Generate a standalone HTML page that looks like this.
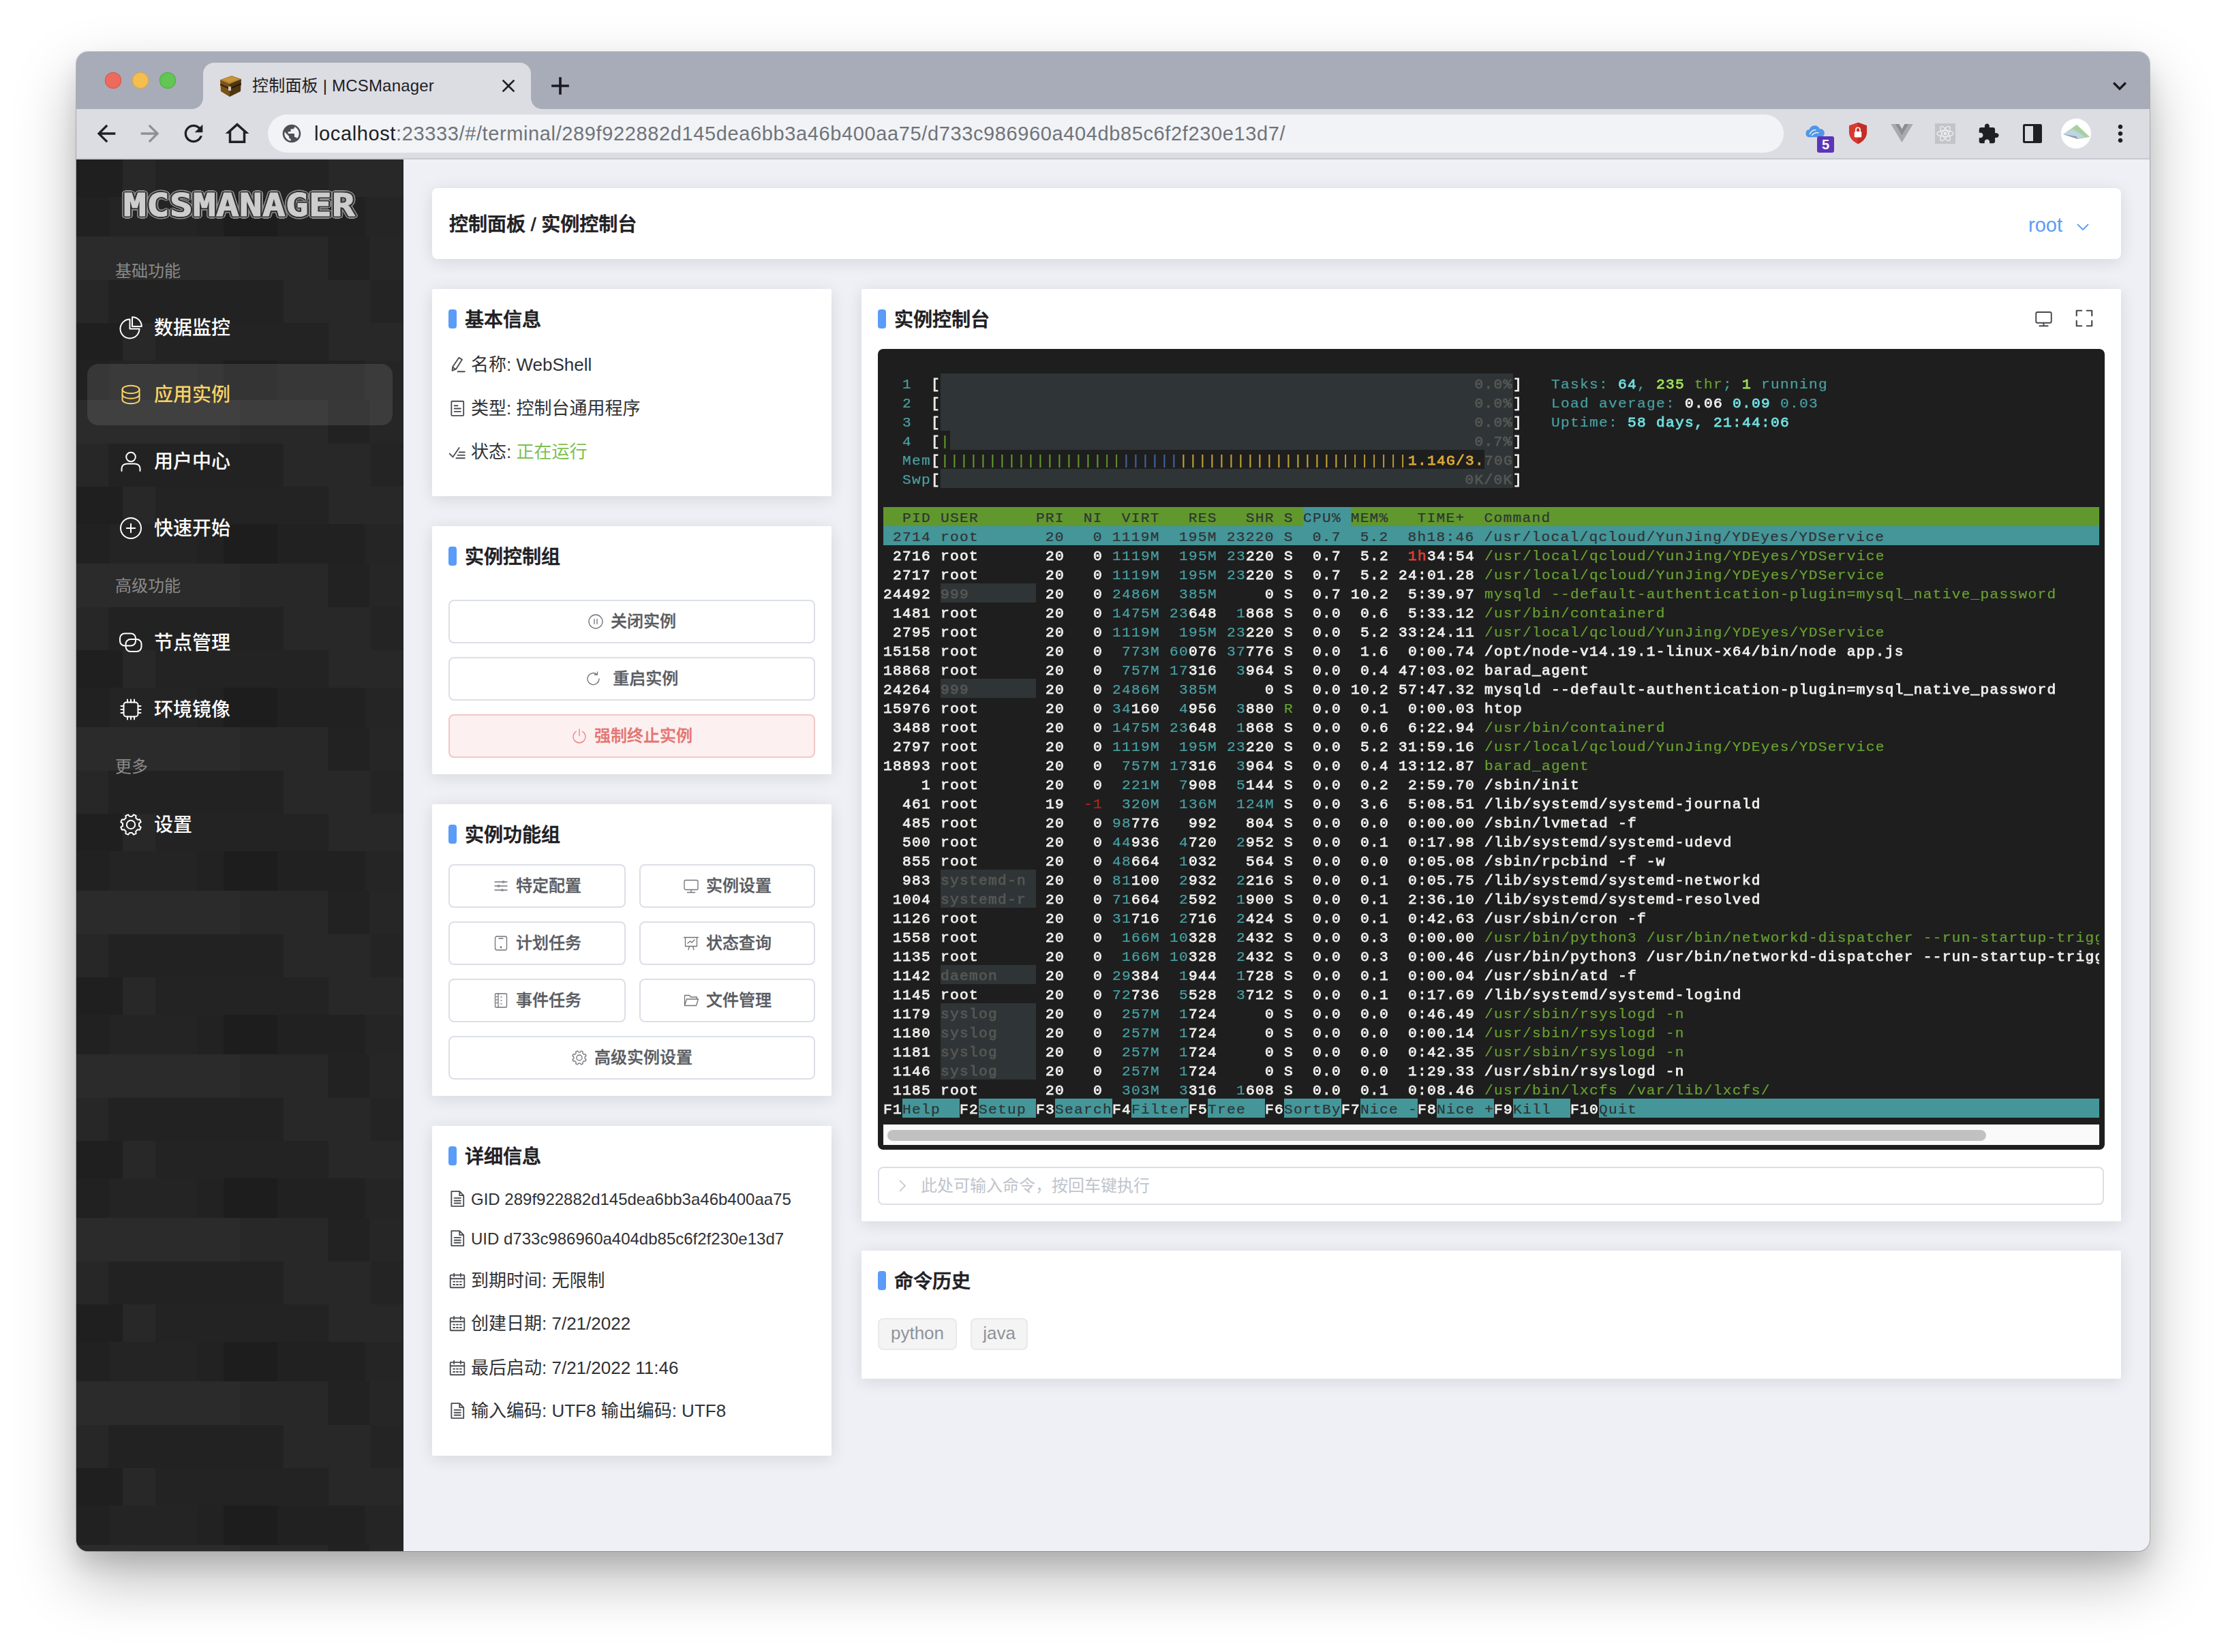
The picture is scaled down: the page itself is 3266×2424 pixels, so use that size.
<!DOCTYPE html>
<html lang="zh-CN"><head><meta charset="utf-8"><title>控制面板 | MCSManager</title>
<style>
*{box-sizing:border-box;margin:0;padding:0}
html,body{width:3266px;height:2424px;overflow:hidden;background:#fff}
body{position:relative;font-family:"Liberation Sans","Noto Sans CJK SC",sans-serif;color:#303133;-webkit-font-smoothing:antialiased}
.abs{position:absolute}
#win{position:absolute;left:112px;top:76px;width:3042px;height:2200px;border-radius:17px;background:#eef0f5;
 box-shadow:0 0 0 1px rgba(0,0,0,.20),0 40px 90px rgba(0,0,0,.28),0 20px 30px rgba(0,0,0,.10);}
#clip{position:absolute;left:0;top:0;width:3042px;height:2200px;border-radius:17px;overflow:hidden}
#tabbar{position:absolute;left:0;top:0;width:3042px;height:84px;background:#a8abb8}
#toolbar{position:absolute;left:0;top:84px;width:3042px;height:74px;background:#dcdde3;border-bottom:2px solid #c9cad1}
.tl{position:absolute;top:30px;width:24px;height:24px;border-radius:50%}
#tab{position:absolute;left:186px;top:16px;width:481px;height:68px;background:#dcdde3;border-radius:16px 16px 0 0}
#tab:before,#tab:after{content:"";position:absolute;bottom:0;width:16px;height:16px;background:radial-gradient(circle at 0 0,rgba(0,0,0,0) 15.5px,#dcdde3 16px)}
#tab:before{left:-16px}
#tab:after{right:-16px;background:radial-gradient(circle at 100% 0,rgba(0,0,0,0) 15.5px,#dcdde3 16px)}
#omni{position:absolute;left:281px;top:8px;width:2224px;height:56px;border-radius:28px;background:#f1f3f6}
#side{position:absolute;left:0;top:158px;width:480px;height:2042px;background:#242424;overflow:hidden}
.grp{position:absolute;left:57px;font-size:24px;line-height:32px;color:#8a8a8a;white-space:nowrap}
.mi{position:absolute;left:16px;width:448px;height:90px;border-radius:16px;color:#fff;font-size:28px;font-weight:500;white-space:nowrap}
.mi svg{position:absolute;left:46px;top:27px;width:36px;height:36px;fill:none;stroke:currentColor;stroke-width:2;stroke-linecap:round;stroke-linejoin:round}
.mi span{position:absolute;left:98px;top:0;line-height:91px}
.mi.act{background:rgba(255,255,255,.1);color:#f8d264}
.card{position:absolute;background:#fff;border-radius:2px;box-shadow:0 4px 24px rgba(10,15,30,.11)}
.ct{position:absolute;left:24px;top:30px;height:28px;padding-left:24px;font-size:28px;line-height:31px;font-weight:500;-webkit-text-stroke:.7px #1f2023;color:#1f2023;white-space:nowrap}
.ct:before{content:"";position:absolute;left:0;top:0;width:12px;height:28px;border-radius:4px;background:#5a9cf8}
.ln{position:absolute;left:24px;font-size:26px;line-height:40px;white-space:nowrap;color:#303133}
.ln svg{position:absolute;left:0;top:7px;width:26px;height:26px;fill:none;stroke:#4a4c50;stroke-width:1.7;stroke-linecap:round;stroke-linejoin:round}
.ln span{position:absolute;left:33px;top:0}
.btn{position:absolute;height:64px;border:2px solid #dcdfe6;border-radius:8px;background:#fff;color:#585b62;-webkit-text-stroke:.35px currentColor;font-size:24px;font-weight:500;line-height:60px;text-align:center;white-space:nowrap}
.btn svg{display:inline-block;vertical-align:middle;width:24px;height:24px;margin-right:10px;margin-top:-4px;fill:none;stroke:currentColor;stroke-width:1.3;opacity:.85;stroke-linecap:round;stroke-linejoin:round}
.btn.dg{background:#fcf0f0;border-color:#f2c6c5;color:#e47470}
#term{position:absolute;left:24px;top:88px;width:1800px;height:1175px;border-radius:8px;background:#1e1e1e;overflow:hidden}
#tv{position:absolute;left:8px;top:8px;width:1784px;height:1200px;transform:scaleY(.933333);transform-origin:0 0;overflow:hidden;font-family:"Liberation Mono",monospace;font-size:21.2px;line-height:30px;letter-spacing:1.278px;color:#eeeeec;white-space:pre}
.r{position:absolute;left:0;height:30px;width:2100px}
.r i{-webkit-text-stroke:.25px currentColor;position:absolute;top:0;height:30px;line-height:36.4px;font-style:normal;display:block;overflow:visible}
.r i.b{font-weight:400;-webkit-text-stroke:.85px currentColor}
.tag{position:absolute;top:99px;height:47px;border:2px solid #e9e9eb;border-radius:8px;background:#f4f4f5;color:#909399;font-size:26px;line-height:41px;text-align:center}
#logo{white-space:nowrap}#logo span{position:absolute;left:1px;top:0px;display:block;transform-origin:0 0;transform:scaleX(1.215);font:bold 46px/44px 'DejaVu Sans Mono','Liberation Mono',monospace;letter-spacing:.3px;color:#cdcdcd;-webkit-text-stroke:1.2px #cdcdcd;text-shadow:1.8px 0.0px 0 #333,1.7px 0.6px 0 #333,1.5px 1.1px 0 #333,1.1px 1.5px 0 #333,0.6px 1.7px 0 #333,0.0px 1.8px 0 #333,-0.6px 1.7px 0 #333,-1.1px 1.5px 0 #333,-1.5px 1.1px 0 #333,-1.7px 0.6px 0 #333,-1.8px 0.0px 0 #333,-1.7px -0.6px 0 #333,-1.5px -1.1px 0 #333,-1.1px -1.5px 0 #333,-0.6px -1.7px 0 #333,-0.0px -1.8px 0 #333,0.6px -1.7px 0 #333,1.1px -1.5px 0 #333,1.5px -1.1px 0 #333,1.7px -0.6px 0 #333,2.2px 0.0px 0 #333,2.1px 0.7px 0 #333,1.8px 1.3px 0 #333,1.3px 1.8px 0 #333,0.7px 2.1px 0 #333,0.0px 2.2px 0 #333,-0.7px 2.1px 0 #333,-1.3px 1.8px 0 #333,-1.8px 1.3px 0 #333,-2.1px 0.7px 0 #333,-2.2px 0.0px 0 #333,-2.1px -0.7px 0 #333,-1.8px -1.3px 0 #333,-1.3px -1.8px 0 #333,-0.7px -2.1px 0 #333,-0.0px -2.2px 0 #333,0.7px -2.1px 0 #333,1.3px -1.8px 0 #333,1.8px -1.3px 0 #333,2.1px -0.7px 0 #333,3.6px 0.0px 0 #8e8e8e,3.4px 1.1px 0 #8e8e8e,2.9px 2.1px 0 #8e8e8e,2.1px 2.9px 0 #8e8e8e,1.1px 3.4px 0 #8e8e8e,0.0px 3.6px 0 #8e8e8e,-1.1px 3.4px 0 #8e8e8e,-2.1px 2.9px 0 #8e8e8e,-2.9px 2.1px 0 #8e8e8e,-3.4px 1.1px 0 #8e8e8e,-3.6px 0.0px 0 #8e8e8e,-3.4px -1.1px 0 #8e8e8e,-2.9px -2.1px 0 #8e8e8e,-2.1px -2.9px 0 #8e8e8e,-1.1px -3.4px 0 #8e8e8e,-0.0px -3.6px 0 #8e8e8e,1.1px -3.4px 0 #8e8e8e,2.1px -2.9px 0 #8e8e8e,2.9px -2.1px 0 #8e8e8e,3.4px -1.1px 0 #8e8e8e}
</style></head>
<body>
<div id="win"><div id="clip">
<div id="tabbar">
<div class="tl" style="left:42px;background:#ed6a5e;box-shadow:inset 0 0 0 1px #d5574a"></div>
<div class="tl" style="left:82px;background:#f5bf4f;box-shadow:inset 0 0 0 1px #dba53a"></div>
<div class="tl" style="left:122px;background:#62c554;box-shadow:inset 0 0 0 1px #4fae42"></div>
<div id="tab">
<svg class="abs" style="left:22px;top:17px;width:36px;height:34px" viewBox="0 0 36 34">
<polygon points="3,8 20,2 34,7 17,14" fill="#b0802f"/><polygon points="3,8 17,14 17,33 4,25" fill="#7a5216"/><polygon points="17,14 34,7 33,25 17,33" fill="#50360f"/>
<polygon points="3,14 17,20 17,22 3,16" fill="#2c1d08"/><polygon points="17,20 34,13 34,15 17,22" fill="#22160a"/>
<rect x="15" y="18" width="4" height="6" fill="#c8c8c8"/><polygon points="6,8 20,3.5 30,7 17,12" fill="#c7953a"/></svg>
<div class="abs" style="left:72px;top:17px;font-size:24px;line-height:34px;color:#202124;white-space:nowrap;letter-spacing:.2px">控制面板 | MCSManager</div>
<svg class="abs" style="left:431.5px;top:18.0px;width:32px;height:32px" viewBox="0 0 24 24" fill="#202124" ><path d="M19 6.41L17.59 5 12 10.59 6.41 5 5 6.41 10.59 12 5 17.59 6.41 19 12 13.41 17.59 19 19 17.59 13.41 12z"/></svg>
</div>
<svg class="abs" style="left:688.0px;top:28.0px;width:44px;height:44px" viewBox="0 0 24 24" fill="#1a1a1e" ><path d="M19 13h-6v6h-2v-6H5v-2h6V5h2v6h6v2z"/></svg>
<svg class="abs" style="left:2978.0px;top:30.0px;width:40px;height:40px" viewBox="0 0 24 24" fill="#1a1a1e" ><path d="M16.59 8.59L12 13.17 7.41 8.59 6 10l6 6 6-6z"/></svg>
</div>
<div id="toolbar">
<svg class="abs" style="left:24.0px;top:16.0px;width:40px;height:40px" viewBox="0 0 24 24" fill="#1f2023" ><path d="M20 11H7.83l5.59-5.59L12 4l-8 8 8 8 1.41-1.41L7.83 13H20v-2z"/></svg>
<svg class="abs" style="left:88.0px;top:16.0px;width:40px;height:40px" viewBox="0 0 24 24" fill="#8f9096" ><path d="M12 4l-1.41 1.41L16.17 11H4v2h12.17l-5.58 5.59L12 20l8-8z"/></svg>
<svg class="abs" style="left:152.0px;top:16.0px;width:40px;height:40px" viewBox="0 0 24 24" fill="#1f2023" ><path d="M17.65 6.35C16.2 4.9 14.21 4 12 4c-4.42 0-7.99 3.58-7.99 8s3.57 8 7.99 8c3.73 0 6.84-2.55 7.73-6h-2.08c-.82 2.33-3.04 4-5.65 4-3.31 0-6-2.69-6-6s2.69-6 6-6c1.66 0 3.14.69 4.22 1.78L13 11h7V4l-2.35 2.35z"/></svg>
<svg class="abs" style="left:215.0px;top:15.0px;width:42px;height:42px" viewBox="0 0 24 24" fill="#1f2023" ><path d="M12 5.69l5 4.5V18H7v-7.81l5-4.5M12 3L2 12h3v8h14v-8h3L12 3z"/></svg>
<div id="omni">
<svg class="abs" style="left:19.0px;top:12.0px;width:32px;height:32px" viewBox="0 0 24 24" fill="#4d5056" ><path d="M12 2C6.48 2 2 6.48 2 12s4.48 10 10 10 10-4.48 10-10S17.52 2 12 2zm-1 17.93c-3.95-.49-7-3.85-7-7.93 0-.62.08-1.21.21-1.79L9 15v1c0 1.1.9 2 2 2v1.93zm6.9-2.54c-.26-.81-1-1.39-1.9-1.39h-1v-3c0-.55-.45-1-1-1H8v-2h2c.55 0 1-.45 1-1V7h2c1.1 0 2-.9 2-2v-.41c2.93 1.19 5 4.06 5 7.41 0 2.08-.8 3.97-2.1 5.39z"/></svg>
<div class="abs" style="left:68px;top:8px;font-size:29px;line-height:40px;color:#70737a;white-space:nowrap;letter-spacing:.62px"><span style="color:#202124">localhost</span>:23333/#/terminal/289f922882d145dea6bb3a46b400aa75/d733c986960a404db85c6f2f230e13d7/</div>
</div>
<svg class="abs" style="left:2535px;top:22px;width:32px;height:24px" viewBox="0 0 40 30"><path d="M9 24a7 7 0 0 1 .6-13.9A10 10 0 0 1 28.500 9 7.500 7.500 0 0 1 31 24z" fill="#4f97e8"/><path d="M10 19c3-6 7-9 12-8M14 21c4-5 8-6 13-5" stroke="#fff" stroke-width="1.6" fill="none"/></svg>
<div class="abs" style="left:2554px;top:40px;width:25px;height:24px;background:#5b34b8;border-radius:3px;color:#fff;font-size:20px;font-weight:700;line-height:24px;text-align:center">5</div>
<svg class="abs" style="left:2599px;top:19px;width:30px;height:33px" viewBox="0 0 34 38"><path d="M17 1L2 6v11c0 9 6 16 15 20 9-4 15-11 15-20V6z" fill="#d8392f"/><path d="M17 1v36c9-4 15-11 15-20V6z" fill="#c42d25"/><rect x="11" y="16" width="12" height="10" rx="1.500" fill="#fff"/><path d="M13.500 16v-3a3.500 3.500 0 0 1 7 0v3" stroke="#fff" stroke-width="2" fill="none"/></svg>
<svg class="abs" style="left:2662px;top:22px;width:33px;height:27px" viewBox="0 0 36 30"><polygon points="0,0 7,0 18,19 29,0 36,0 18,30" fill="#a8a9ad"/><polygon points="7,0 13.500,0 18,8 22.500,0 29,0 18,19" fill="#8c8d92"/></svg>
<svg class="abs" style="left:2727px;top:21px;width:30px;height:30px" viewBox="0 0 30 30"><rect width="30" height="30" fill="#c3c4c8"/><g fill="none" stroke="#eeeff2" stroke-width="1.300"><ellipse cx="15" cy="15" rx="12" ry="4.500"/><ellipse cx="15" cy="15" rx="12" ry="4.500" transform="rotate(60 15 15)"/><ellipse cx="15" cy="15" rx="12" ry="4.500" transform="rotate(120 15 15)"/></g><circle cx="15" cy="15" r="2.200" fill="#eeeff2"/></svg>
<svg class="abs" style="left:2788.5px;top:19.5px;width:33px;height:33px" viewBox="0 0 24 24" fill="#1f2023" ><path d="M20.5 11H19V7c0-1.1-.9-2-2-2h-4V3.5C13 2.12 11.88 1 10.5 1S8 2.12 8 3.5V5H4c-1.1 0-1.99.9-1.99 2v3.8H3.5c1.49 0 2.7 1.21 2.7 2.7s-1.21 2.7-2.7 2.7H2V20c0 1.1.9 2 2 2h3.8v-1.5c0-1.49 1.21-2.7 2.7-2.7 1.49 0 2.7 1.21 2.7 2.7V22H17c1.1 0 2-.9 2-2v-4h1.5c1.38 0 2.5-1.12 2.5-2.5S21.88 11 20.5 11z"/></svg>
<svg class="abs" style="left:2856px;top:22px;width:28px;height:28px" viewBox="0 0 28 28"><rect x="1.500" y="1.500" width="25" height="25" rx="1" fill="none" stroke="#1f2023" stroke-width="3"/><rect x="15" y="2" width="11" height="24" fill="#1f2023"/></svg>
<svg class="abs" style="left:2912px;top:14px;width:44px;height:44px" viewBox="0 0 44 44"><circle cx="22" cy="22" r="22" fill="#fff"/><polygon points="3,23 23,9 42,27 25,30" fill="#b5d3ac"/><polygon points="3,23 16,16 34,26 25,30" fill="#bcd4e6"/><polygon points="3,23 25,30 22,26" fill="#8c9aa6"/><polygon points="23,9 42,27 36,27 17,14" fill="#a8cfa2"/></svg>
<svg class="abs" style="left:2979.0px;top:16.0px;width:40px;height:40px" viewBox="0 0 24 24" fill="#1f2023" ><path d="M12 8c1.1 0 2-.9 2-2s-.9-2-2-2-2 .9-2 2 .9 2 2 2zm0 2c-1.1 0-2 .9-2 2s.9 2 2 2 2-.9 2-2-.9-2-2-2zm0 6c-1.1 0-2 .9-2 2s.9 2 2 2 2-.9 2-2-.9-2-2-2z"/></svg>
</div>
<div id="side">
<svg class="abs" style="left:0;top:0;width:480px;height:2043px"><defs><pattern id="tx" width="480" height="240" y="55" patternUnits="userSpaceOnUse">
<rect width="480" height="240" fill="#242424"/>
<rect x="0" y="0" width="49" height="58" fill="#212121"/><rect x="177" y="0" width="39" height="58" fill="#222"/><rect x="216" y="0" width="79" height="58" fill="#1d1d1d"/><rect x="295" y="0" width="128" height="58" fill="#212121"/><rect x="423" y="0" width="57" height="58" fill="#252525"/>
<rect x="0" y="58" width="240" height="64" fill="#2b2b2b"/><rect x="240" y="58" width="129" height="64" fill="#282828"/><rect x="369" y="58" width="61" height="64" fill="#222"/><rect x="430" y="58" width="50" height="64" fill="#262626"/>
<rect x="0" y="122" width="47" height="63" fill="#272727"/><rect x="47" y="122" width="257" height="63" fill="#222"/><rect x="304" y="122" width="128" height="63" fill="#282828"/><rect x="432" y="122" width="48" height="63" fill="#242424"/>
<rect x="0" y="185" width="68" height="55" fill="#1f1f1f"/><rect x="68" y="185" width="48" height="55" fill="#282828"/><rect x="116" y="185" width="254" height="55" fill="#232323"/><rect x="370" y="185" width="110" height="55" fill="#282828"/>
</pattern></defs><rect width="480" height="2043" fill="url(#tx)"/></svg>
<div class="abs" id="logo" style="left:68px;top:45px;width:343px;height:44px;"><span>MCSMANAGER</span></div>
<div class="grp" style="top:148px">基础功能</div>
<div class="mi" style="top:202px"><svg viewBox="0 0 36 36"><path d="M16.500 5.500A14 14 0 1 0 30.500 19.500H16.500z"/><path d="M20 2.200a13.800 13.800 0 0 1 13.800 13.800H20z"/></svg><span>数据监控</span></div>
<div class="mi act" style="top:300px"><svg viewBox="0 0 36 36"><ellipse cx="18" cy="10.500" rx="12.500" ry="5.800"/><path d="M5.500 10.500v7.500c0 3.200 5.600 5.800 12.500 5.800s12.500-2.600 12.500-5.800v-7.500"/><path d="M5.500 18v7.500c0 3.200 5.600 5.800 12.500 5.800s12.500-2.600 12.500-5.800V18"/></svg><span>应用实例</span></div>
<div class="mi" style="top:398px"><svg viewBox="0 0 36 36"><circle cx="18" cy="11.500" r="6.800"/><path d="M4.500 32v-3.500c0-4.400 3.600-7 8-7h11c4.400 0 8 2.600 8 7V32"/></svg><span>用户中心</span></div>
<div class="mi" style="top:496px"><svg viewBox="0 0 36 36"><circle cx="18" cy="18" r="15"/><path d="M18 11.800v12.400M11.800 18h12.400"/></svg><span>快速开始</span></div>
<div class="grp" style="top:610px">高级功能</div>
<div class="mi" style="top:664px"><svg viewBox="0 0 36 36"><rect x="2" y="4.500" width="23" height="18" rx="7"/><rect x="10.500" y="13" width="23" height="18" rx="7"/></svg><span>节点管理</span></div>
<div class="mi" style="top:762px"><svg viewBox="0 0 36 36"><rect x="7.500" y="7.500" width="21" height="21" rx="4"/><path d="M13 3.500v4M18 3.500v4M23 3.500v4M13 28.500v4M18 28.500v4M23 28.500v4M3.500 13h4M3.500 18h4M3.500 23h4M28.500 13h4M28.500 18h4M28.500 23h4"/></svg><span>环境镜像</span></div>
<div class="grp" style="top:875px">更多</div>
<div class="mi" style="top:931px"><svg viewBox="0 0 36 36"><circle cx="18" cy="18" r="6.200"/><path d="M30.0 19.9L32.7 21.9L31.1 25.6L27.9 25.2L25.2 27.9L25.6 31.1L21.9 32.7L19.9 30.0L16.1 30.0L14.1 32.7L10.4 31.1L10.8 27.9L8.1 25.2L4.9 25.6L3.3 21.9L6.0 19.9L6.0 16.1L3.3 14.1L4.9 10.4L8.1 10.8L10.8 8.1L10.4 4.9L14.1 3.3L16.1 6.0L19.9 6.0L21.9 3.3L25.6 4.9L25.2 8.1L27.9 10.8L31.1 10.4L32.7 14.1L30.0 16.1z"/></svg><span>设置</span></div>
</div>
<div class="card" style="left:522px;top:200px;width:2478px;height:104px;border-radius:8px"><div class="abs" style="left:25px;top:34px;font-size:28px;line-height:40px;font-weight:500;-webkit-text-stroke:.7px #1f2023;color:#1f2023;white-space:nowrap">控制面板 / 实例控制台</div><div class="abs" style="left:2342px;top:36px;font-size:29px;line-height:36px;color:#5a9cf8">root</div><svg class="abs" style="left:2410px;top:45px;width:24px;height:24px;fill:none;stroke:#5a9cf8;stroke-width:1.800;stroke-linecap:round;stroke-linejoin:round" viewBox="0 0 24 24"><path d="M4.500 8.500l7.500 7.500 7.500-7.500"/></svg></div>
<div class="card" style="left:522px;top:348px;width:586px;height:304px"><div class="ct">基本信息</div><div class="ln" style="top:91px"><svg viewBox="0 0 24 24"><path d="M14.200 2.500l4.200 2.700-8.300 13-5 2 .6-5.200zM5.500 15.500l4.300 2.800M12.500 21.500h9.500"/></svg><span>名称: WebShell</span></div><div class="ln" style="top:155px"><svg viewBox="0 0 24 24"><rect x="4" y="2.500" width="16.500" height="19.500" rx="1"/><path d="M8 8.500h4.500M8 12.500h8.500M8 16.500h8.500"/></svg><span>类型: 控制台通用程序</span></div><div class="ln" style="top:219px"><svg viewBox="0 0 24 24"><path d="M1.500 14.500l4.500 4.500L14.500 6.500M14.500 12.500h7.500M12.500 16.500h9.500M10.500 20.500h11.500"/></svg><span>状态: <b style="font-weight:400;color:#7ec050">正在运行</b></span></div></div>
<div class="card" style="left:522px;top:696px;width:586px;height:364px"><div class="ct">实例控制组</div><div class="btn" style="left:24px;top:108px;width:538px"><svg viewBox="0 0 24 24"><circle cx="12" cy="12" r="10"/><path d="M10 8.500v7M14 8.500v7"/></svg>关闭实例</div><div class="btn" style="left:24px;top:192px;width:538px"><svg viewBox="0 0 24 24"><path d="M20 12a8.500 8.500 0 1 1-3.200-6.600M17.500 1.800v4.200h-4.200"/></svg>&nbsp;重启实例</div><div class="btn dg" style="left:24px;top:276px;width:538px"><svg viewBox="0 0 24 24"><path d="M7.500 5.200a9 9 0 1 0 9 0M12 2v9.500"/></svg>强制终止实例</div></div>
<div class="card" style="left:522px;top:1104px;width:586px;height:428px"><div class="ct">实例功能组</div><div class="btn" style="left:24px;top:88px;width:260px"><svg viewBox="0 0 24 24"><path d="M3 6h18M3 12h18M3 18h18"/><circle cx="15.500" cy="6" r="1.200" fill="#fff"/><circle cx="8.500" cy="12" r="1.200" fill="#fff"/><circle cx="14" cy="18" r="1.200" fill="#fff"/></svg>特定配置</div><div class="btn" style="left:304px;top:88px;width:258px"><svg viewBox="0 0 24 24"><rect x="2" y="3.500" width="20" height="14" rx="2"/><path d="M12 17.500v4M6.500 21.500h11"/></svg>实例设置</div><div class="btn" style="left:24px;top:172px;width:260px"><svg viewBox="0 0 24 24"><rect x="3.500" y="2" width="17" height="20" rx="2.500"/><path d="M9 5h6"/><circle cx="12" cy="18" r=".8" fill="currentColor"/></svg>计划任务</div><div class="btn" style="left:304px;top:172px;width:258px"><svg viewBox="0 0 24 24"><path d="M1.500 3.500h21M3.500 3.500v13h17v-13M8 21.500l1.500-5M16 21.500l-1.500-5M7 12l3.500-3 2.500 2 4-4"/></svg>状态查询</div><div class="btn" style="left:24px;top:256px;width:260px"><svg viewBox="0 0 24 24"><rect x="3.500" y="2" width="17" height="20" rx="1"/><path d="M8 2v20M5 6.500h1.500M5 11h1.500M5 15.500h1.500M12 7h1M12 12h1M12 17h1"/></svg>事件任务</div><div class="btn" style="left:304px;top:256px;width:258px"><svg viewBox="0 0 24 24"><path d="M2.500 19.500v-15h7l2 2.500h9v3M2.500 19.500l3-9.500h17l-3 9.500z"/></svg>文件管理</div><div class="btn" style="left:24px;top:340px;width:538px"><svg viewBox="0 0 24 24"><circle cx="12" cy="12" r="4"/><path d="M20.1 13.3L22.0 14.6L20.9 17.2L18.6 16.8L16.8 18.6L17.2 20.9L14.6 22.0L13.3 20.1L10.7 20.1L9.4 22.0L6.8 20.9L7.2 18.6L5.4 16.8L3.1 17.2L2.0 14.6L3.9 13.3L3.9 10.7L2.0 9.4L3.1 6.8L5.4 7.2L7.2 5.4L6.8 3.1L9.4 2.0L10.7 3.9L13.3 3.9L14.6 2.0L17.2 3.1L16.8 5.4L18.6 7.2L20.9 6.8L22.0 9.4L20.1 10.7z"/></svg>高级实例设置</div></div>
<div class="card" style="left:522px;top:1576px;width:586px;height:484px"><div class="ct">详细信息</div><div class="ln" style="top:87px"><svg viewBox="0 0 24 24"><path d="M4 2h11l5.500 5.500V22H4zM15 2v5.500h5.500M8 11h8.500M8 14.500h8.500M8 18h8.500"/></svg><span><b style="font-weight:400;font-size:24px">GID 289f922882d145dea6bb3a46b400aa75</b></span></div><div class="ln" style="top:145px"><svg viewBox="0 0 24 24"><path d="M4 2h11l5.500 5.500V22H4zM15 2v5.500h5.500M8 11h8.500M8 14.500h8.500M8 18h8.500"/></svg><span><b style="font-weight:400;font-size:24px">UID d733c986960a404db85c6f2f230e13d7</b></span></div><div class="ln" style="top:207px"><svg viewBox="0 0 24 24"><rect x="2.500" y="4.500" width="19" height="17" rx="1"/><path d="M2.500 9.500h19M7.500 2.500v4M16.500 2.500v4M6.500 13.500h2M11 13.500h2M15.500 13.500h2M6.500 17.500h2M11 17.500h2M15.500 17.500h2"/></svg><span>到期时间: 无限制</span></div><div class="ln" style="top:270px"><svg viewBox="0 0 24 24"><rect x="2.500" y="4.500" width="19" height="17" rx="1"/><path d="M2.500 9.500h19M7.500 2.500v4M16.500 2.500v4M6.500 13.500h2M11 13.500h2M15.500 13.500h2M6.500 17.500h2M11 17.500h2M15.500 17.500h2"/></svg><span>创建日期: 7/21/2022</span></div><div class="ln" style="top:335px"><svg viewBox="0 0 24 24"><rect x="2.500" y="4.500" width="19" height="17" rx="1"/><path d="M2.500 9.500h19M7.500 2.500v4M16.500 2.500v4M6.500 13.500h2M11 13.500h2M15.500 13.500h2M6.500 17.500h2M11 17.500h2M15.500 17.500h2"/></svg><span>最后启动: 7/21/2022 11:46</span></div><div class="ln" style="top:398px"><svg viewBox="0 0 24 24"><path d="M4 2h11l5.500 5.500V22H4zM15 2v5.500h5.500M8 11h8.500M8 14.500h8.500M8 18h8.500"/></svg><span>输入编码: UTF8 输出编码: UTF8</span></div></div>
<div class="card" style="left:1152px;top:348px;width:1848px;height:1368px"><div class="ct">实例控制台</div>
<svg class="abs" style="left:1721px;top:30px;width:27px;height:27px;fill:none;stroke:#46484d;stroke-width:1.700;stroke-linecap:round;stroke-linejoin:round" viewBox="0 0 24 24"><rect x="2" y="3.500" width="20" height="14" rx="2"/><path d="M12 17.500v4M6.500 21.500h11"/></svg>
<svg class="abs" style="left:1779px;top:28px;width:30px;height:30px;fill:none;stroke:#46484d;stroke-width:1.700;stroke-linecap:round;stroke-linejoin:round" viewBox="0 0 24 24"><path d="M3 9V3h6M15 3h6v6M21 15v6h-6M9 21H3v-6"/></svg>
<div id="term"><div id="tv"><div class="r" style="top:30px"><i style="left:28px;width:14px;color:#48a0a3;">1</i><i class="b" style="left:70px;width:14px;color:#eeeeec;">[</i><i class="b" style="left:84px;width:840px;color:#555753;background:#2f3436;">                                                        0.0%</i><i class="b" style="left:924px;width:14px;color:#eeeeec;">]</i><i style="left:980px;width:98px;color:#48a0a3;">Tasks: </i><i class="b" style="left:1078px;width:28px;color:#70dfe0;">64</i><i style="left:1106px;width:28px;color:#48a0a3;">, </i><i class="b" style="left:1134px;width:42px;color:#9ee055;">235</i><i style="left:1176px;width:56px;color:#66a030;"> thr</i><i style="left:1232px;width:28px;color:#48a0a3;">; </i><i class="b" style="left:1260px;width:14px;color:#9ee055;">1</i><i style="left:1274px;width:112px;color:#48a0a3;"> running</i></div><div class="r" style="top:60px"><i style="left:28px;width:14px;color:#48a0a3;">2</i><i class="b" style="left:70px;width:14px;color:#eeeeec;">[</i><i class="b" style="left:84px;width:840px;color:#555753;background:#2f3436;">                                                        0.0%</i><i class="b" style="left:924px;width:14px;color:#eeeeec;">]</i><i style="left:980px;width:196px;color:#48a0a3;">Load average: </i><i class="b" style="left:1176px;width:56px;color:#eeeeec;">0.06</i><i class="b" style="left:1246px;width:56px;color:#70dfe0;">0.09</i><i style="left:1316px;width:56px;color:#48a0a3;">0.03</i></div><div class="r" style="top:90px"><i style="left:28px;width:14px;color:#48a0a3;">3</i><i class="b" style="left:70px;width:14px;color:#eeeeec;">[</i><i class="b" style="left:84px;width:840px;color:#555753;background:#2f3436;">                                                        0.0%</i><i class="b" style="left:924px;width:14px;color:#eeeeec;">]</i><i style="left:980px;width:112px;color:#48a0a3;">Uptime: </i><i class="b" style="left:1092px;width:238px;color:#70dfe0;">58 days, 21:44:06</i></div><div class="r" style="top:120px"><i style="left:28px;width:14px;color:#48a0a3;">4</i><i class="b" style="left:70px;width:14px;color:#eeeeec;">[</i><i style="left:84px;width:14px;color:#61982d;">|</i><i class="b" style="left:98px;width:826px;color:#555753;background:#2f3436;">                                                       0.7%</i><i class="b" style="left:924px;width:14px;color:#eeeeec;">]</i></div><div class="r" style="top:150px"><i style="left:28px;width:42px;color:#48a0a3;">Mem</i><i class="b" style="left:70px;width:14px;color:#eeeeec;">[</i><i style="left:84px;width:266px;color:#61982d;">|||||||||||||||||||</i><i style="left:350px;width:84px;color:#40649f;">||||||</i><i style="left:434px;width:336px;color:#bea134;">||||||||||||||||||||||||</i><i class="b" style="left:770px;width:112px;color:#dcaa38;">1.14G/3.</i><i class="b" style="left:882px;width:42px;color:#555753;background:#2f3436;">70G</i><i class="b" style="left:924px;width:14px;color:#eeeeec;">]</i></div><div class="r" style="top:180px"><i style="left:28px;width:42px;color:#48a0a3;">Swp</i><i class="b" style="left:70px;width:14px;color:#eeeeec;">[</i><i class="b" style="left:84px;width:840px;color:#555753;background:#2f3436;">                                                       0K/0K</i><i class="b" style="left:924px;width:14px;color:#eeeeec;">]</i></div><div class="r" style="top:240px"><i style="left:0px;width:2100px;color:#2f3436;background:#61982d;">  PID USER      PRI  NI  VIRT   RES   SHR S CPU% MEM%   TIME+  Command</i><i style="left:616px;width:70px;color:#2f3436;background:#449699;">CPU% </i></div><div class="r" style="top:270px"><i style="left:0px;width:2100px;color:#2f3436;background:#449699;"> 2714 root       20   0 1119M  195M 23220 S  0.7  5.2  8h18:46 /usr/local/qcloud/YunJing/YDEyes/YDService</i></div><div class="r" style="top:300px"><i class="b" style="left:0px;width:70px;color:#eeeeec;"> 2716</i><i class="b" style="left:84px;width:56px;color:#eeeeec;">root</i><i class="b" style="left:224px;width:42px;color:#eeeeec;"> 20</i><i class="b" style="left:280px;width:42px;color:#eeeeec;">  0</i><i style="left:336px;width:70px;color:#48a0a3;">1119M</i><i style="left:434px;width:56px;color:#48a0a3;">195M</i><i style="left:504px;width:28px;color:#48a0a3;">23</i><i class="b" style="left:532px;width:42px;color:#eeeeec;">220</i><i class="b" style="left:588px;width:14px;color:#eeeeec;">S</i><i class="b" style="left:616px;width:56px;color:#eeeeec;"> 0.7</i><i class="b" style="left:686px;width:56px;color:#eeeeec;"> 5.2</i><i class="b" style="left:770px;width:28px;color:#dc3f36;">1h</i><i class="b" style="left:798px;width:70px;color:#eeeeec;">34:54</i><i style="left:882px;width:588px;color:#66a030;">/usr/local/qcloud/YunJing/YDEyes/YDService</i></div><div class="r" style="top:330px"><i class="b" style="left:0px;width:70px;color:#eeeeec;"> 2717</i><i class="b" style="left:84px;width:56px;color:#eeeeec;">root</i><i class="b" style="left:224px;width:42px;color:#eeeeec;"> 20</i><i class="b" style="left:280px;width:42px;color:#eeeeec;">  0</i><i style="left:336px;width:70px;color:#48a0a3;">1119M</i><i style="left:434px;width:56px;color:#48a0a3;">195M</i><i style="left:504px;width:28px;color:#48a0a3;">23</i><i class="b" style="left:532px;width:42px;color:#eeeeec;">220</i><i class="b" style="left:588px;width:14px;color:#eeeeec;">S</i><i class="b" style="left:616px;width:56px;color:#eeeeec;"> 0.7</i><i class="b" style="left:686px;width:56px;color:#eeeeec;"> 5.2</i><i class="b" style="left:756px;width:112px;color:#eeeeec;">24:01.28</i><i style="left:882px;width:588px;color:#66a030;">/usr/local/qcloud/YunJing/YDEyes/YDService</i></div><div class="r" style="top:360px"><i class="b" style="left:0px;width:70px;color:#eeeeec;">24492</i><i class="b" style="left:84px;width:140px;color:#555753;background:#2f3436;">999</i><i class="b" style="left:224px;width:42px;color:#eeeeec;"> 20</i><i class="b" style="left:280px;width:42px;color:#eeeeec;">  0</i><i style="left:336px;width:70px;color:#48a0a3;">2486M</i><i style="left:434px;width:56px;color:#48a0a3;">385M</i><i class="b" style="left:560px;width:14px;color:#eeeeec;">0</i><i class="b" style="left:588px;width:14px;color:#eeeeec;">S</i><i class="b" style="left:616px;width:56px;color:#eeeeec;"> 0.7</i><i class="b" style="left:686px;width:56px;color:#eeeeec;">10.2</i><i class="b" style="left:756px;width:112px;color:#eeeeec;"> 5:39.97</i><i style="left:882px;width:840px;color:#66a030;">mysqld --default-authentication-plugin=mysql_native_password</i></div><div class="r" style="top:390px"><i class="b" style="left:0px;width:70px;color:#eeeeec;"> 1481</i><i class="b" style="left:84px;width:56px;color:#eeeeec;">root</i><i class="b" style="left:224px;width:42px;color:#eeeeec;"> 20</i><i class="b" style="left:280px;width:42px;color:#eeeeec;">  0</i><i style="left:336px;width:70px;color:#48a0a3;">1475M</i><i style="left:420px;width:28px;color:#48a0a3;">23</i><i class="b" style="left:448px;width:42px;color:#eeeeec;">648</i><i style="left:518px;width:14px;color:#48a0a3;">1</i><i class="b" style="left:532px;width:42px;color:#eeeeec;">868</i><i class="b" style="left:588px;width:14px;color:#eeeeec;">S</i><i class="b" style="left:616px;width:56px;color:#eeeeec;"> 0.0</i><i class="b" style="left:686px;width:56px;color:#eeeeec;"> 0.6</i><i class="b" style="left:756px;width:112px;color:#eeeeec;"> 5:33.12</i><i style="left:882px;width:266px;color:#66a030;">/usr/bin/containerd</i></div><div class="r" style="top:420px"><i class="b" style="left:0px;width:70px;color:#eeeeec;"> 2795</i><i class="b" style="left:84px;width:56px;color:#eeeeec;">root</i><i class="b" style="left:224px;width:42px;color:#eeeeec;"> 20</i><i class="b" style="left:280px;width:42px;color:#eeeeec;">  0</i><i style="left:336px;width:70px;color:#48a0a3;">1119M</i><i style="left:434px;width:56px;color:#48a0a3;">195M</i><i style="left:504px;width:28px;color:#48a0a3;">23</i><i class="b" style="left:532px;width:42px;color:#eeeeec;">220</i><i class="b" style="left:588px;width:14px;color:#eeeeec;">S</i><i class="b" style="left:616px;width:56px;color:#eeeeec;"> 0.0</i><i class="b" style="left:686px;width:56px;color:#eeeeec;"> 5.2</i><i class="b" style="left:756px;width:112px;color:#eeeeec;">33:24.11</i><i style="left:882px;width:588px;color:#66a030;">/usr/local/qcloud/YunJing/YDEyes/YDService</i></div><div class="r" style="top:450px"><i class="b" style="left:0px;width:70px;color:#eeeeec;">15158</i><i class="b" style="left:84px;width:56px;color:#eeeeec;">root</i><i class="b" style="left:224px;width:42px;color:#eeeeec;"> 20</i><i class="b" style="left:280px;width:42px;color:#eeeeec;">  0</i><i style="left:350px;width:56px;color:#48a0a3;">773M</i><i style="left:420px;width:28px;color:#48a0a3;">60</i><i class="b" style="left:448px;width:42px;color:#eeeeec;">076</i><i style="left:504px;width:28px;color:#48a0a3;">37</i><i class="b" style="left:532px;width:42px;color:#eeeeec;">776</i><i class="b" style="left:588px;width:14px;color:#eeeeec;">S</i><i class="b" style="left:616px;width:56px;color:#eeeeec;"> 0.0</i><i class="b" style="left:686px;width:56px;color:#eeeeec;"> 1.6</i><i class="b" style="left:756px;width:112px;color:#eeeeec;"> 0:00.74</i><i class="b" style="left:882px;width:616px;color:#eeeeec;">/opt/node-v14.19.1-linux-x64/bin/node app.js</i></div><div class="r" style="top:480px"><i class="b" style="left:0px;width:70px;color:#eeeeec;">18868</i><i class="b" style="left:84px;width:56px;color:#eeeeec;">root</i><i class="b" style="left:224px;width:42px;color:#eeeeec;"> 20</i><i class="b" style="left:280px;width:42px;color:#eeeeec;">  0</i><i style="left:350px;width:56px;color:#48a0a3;">757M</i><i style="left:420px;width:28px;color:#48a0a3;">17</i><i class="b" style="left:448px;width:42px;color:#eeeeec;">316</i><i style="left:518px;width:14px;color:#48a0a3;">3</i><i class="b" style="left:532px;width:42px;color:#eeeeec;">964</i><i class="b" style="left:588px;width:14px;color:#eeeeec;">S</i><i class="b" style="left:616px;width:56px;color:#eeeeec;"> 0.0</i><i class="b" style="left:686px;width:56px;color:#eeeeec;"> 0.4</i><i class="b" style="left:756px;width:112px;color:#eeeeec;">47:03.02</i><i class="b" style="left:882px;width:154px;color:#eeeeec;">barad_agent</i></div><div class="r" style="top:510px"><i class="b" style="left:0px;width:70px;color:#eeeeec;">24264</i><i class="b" style="left:84px;width:140px;color:#555753;background:#2f3436;">999</i><i class="b" style="left:224px;width:42px;color:#eeeeec;"> 20</i><i class="b" style="left:280px;width:42px;color:#eeeeec;">  0</i><i style="left:336px;width:70px;color:#48a0a3;">2486M</i><i style="left:434px;width:56px;color:#48a0a3;">385M</i><i class="b" style="left:560px;width:14px;color:#eeeeec;">0</i><i class="b" style="left:588px;width:14px;color:#eeeeec;">S</i><i class="b" style="left:616px;width:56px;color:#eeeeec;"> 0.0</i><i class="b" style="left:686px;width:56px;color:#eeeeec;">10.2</i><i class="b" style="left:756px;width:112px;color:#eeeeec;">57:47.32</i><i class="b" style="left:882px;width:840px;color:#eeeeec;">mysqld --default-authentication-plugin=mysql_native_password</i></div><div class="r" style="top:540px"><i class="b" style="left:0px;width:70px;color:#eeeeec;">15976</i><i class="b" style="left:84px;width:56px;color:#eeeeec;">root</i><i class="b" style="left:224px;width:42px;color:#eeeeec;"> 20</i><i class="b" style="left:280px;width:42px;color:#eeeeec;">  0</i><i style="left:336px;width:28px;color:#48a0a3;">34</i><i class="b" style="left:364px;width:42px;color:#eeeeec;">160</i><i style="left:434px;width:14px;color:#48a0a3;">4</i><i class="b" style="left:448px;width:42px;color:#eeeeec;">956</i><i style="left:518px;width:14px;color:#48a0a3;">3</i><i class="b" style="left:532px;width:42px;color:#eeeeec;">880</i><i style="left:588px;width:14px;color:#66a030;">R</i><i class="b" style="left:616px;width:56px;color:#eeeeec;"> 0.0</i><i class="b" style="left:686px;width:56px;color:#eeeeec;"> 0.1</i><i class="b" style="left:756px;width:112px;color:#eeeeec;"> 0:00.03</i><i class="b" style="left:882px;width:56px;color:#eeeeec;">htop</i></div><div class="r" style="top:570px"><i class="b" style="left:0px;width:70px;color:#eeeeec;"> 3488</i><i class="b" style="left:84px;width:56px;color:#eeeeec;">root</i><i class="b" style="left:224px;width:42px;color:#eeeeec;"> 20</i><i class="b" style="left:280px;width:42px;color:#eeeeec;">  0</i><i style="left:336px;width:70px;color:#48a0a3;">1475M</i><i style="left:420px;width:28px;color:#48a0a3;">23</i><i class="b" style="left:448px;width:42px;color:#eeeeec;">648</i><i style="left:518px;width:14px;color:#48a0a3;">1</i><i class="b" style="left:532px;width:42px;color:#eeeeec;">868</i><i class="b" style="left:588px;width:14px;color:#eeeeec;">S</i><i class="b" style="left:616px;width:56px;color:#eeeeec;"> 0.0</i><i class="b" style="left:686px;width:56px;color:#eeeeec;"> 0.6</i><i class="b" style="left:756px;width:112px;color:#eeeeec;"> 6:22.94</i><i style="left:882px;width:266px;color:#66a030;">/usr/bin/containerd</i></div><div class="r" style="top:600px"><i class="b" style="left:0px;width:70px;color:#eeeeec;"> 2797</i><i class="b" style="left:84px;width:56px;color:#eeeeec;">root</i><i class="b" style="left:224px;width:42px;color:#eeeeec;"> 20</i><i class="b" style="left:280px;width:42px;color:#eeeeec;">  0</i><i style="left:336px;width:70px;color:#48a0a3;">1119M</i><i style="left:434px;width:56px;color:#48a0a3;">195M</i><i style="left:504px;width:28px;color:#48a0a3;">23</i><i class="b" style="left:532px;width:42px;color:#eeeeec;">220</i><i class="b" style="left:588px;width:14px;color:#eeeeec;">S</i><i class="b" style="left:616px;width:56px;color:#eeeeec;"> 0.0</i><i class="b" style="left:686px;width:56px;color:#eeeeec;"> 5.2</i><i class="b" style="left:756px;width:112px;color:#eeeeec;">31:59.16</i><i style="left:882px;width:588px;color:#66a030;">/usr/local/qcloud/YunJing/YDEyes/YDService</i></div><div class="r" style="top:630px"><i class="b" style="left:0px;width:70px;color:#eeeeec;">18893</i><i class="b" style="left:84px;width:56px;color:#eeeeec;">root</i><i class="b" style="left:224px;width:42px;color:#eeeeec;"> 20</i><i class="b" style="left:280px;width:42px;color:#eeeeec;">  0</i><i style="left:350px;width:56px;color:#48a0a3;">757M</i><i style="left:420px;width:28px;color:#48a0a3;">17</i><i class="b" style="left:448px;width:42px;color:#eeeeec;">316</i><i style="left:518px;width:14px;color:#48a0a3;">3</i><i class="b" style="left:532px;width:42px;color:#eeeeec;">964</i><i class="b" style="left:588px;width:14px;color:#eeeeec;">S</i><i class="b" style="left:616px;width:56px;color:#eeeeec;"> 0.0</i><i class="b" style="left:686px;width:56px;color:#eeeeec;"> 0.4</i><i class="b" style="left:756px;width:112px;color:#eeeeec;">13:12.87</i><i style="left:882px;width:154px;color:#66a030;">barad_agent</i></div><div class="r" style="top:660px"><i class="b" style="left:0px;width:70px;color:#eeeeec;">    1</i><i class="b" style="left:84px;width:56px;color:#eeeeec;">root</i><i class="b" style="left:224px;width:42px;color:#eeeeec;"> 20</i><i class="b" style="left:280px;width:42px;color:#eeeeec;">  0</i><i style="left:350px;width:56px;color:#48a0a3;">221M</i><i style="left:434px;width:14px;color:#48a0a3;">7</i><i class="b" style="left:448px;width:42px;color:#eeeeec;">908</i><i style="left:518px;width:14px;color:#48a0a3;">5</i><i class="b" style="left:532px;width:42px;color:#eeeeec;">144</i><i class="b" style="left:588px;width:14px;color:#eeeeec;">S</i><i class="b" style="left:616px;width:56px;color:#eeeeec;"> 0.0</i><i class="b" style="left:686px;width:56px;color:#eeeeec;"> 0.2</i><i class="b" style="left:756px;width:112px;color:#eeeeec;"> 2:59.70</i><i class="b" style="left:882px;width:140px;color:#eeeeec;">/sbin/init</i></div><div class="r" style="top:690px"><i class="b" style="left:0px;width:70px;color:#eeeeec;">  461</i><i class="b" style="left:84px;width:56px;color:#eeeeec;">root</i><i class="b" style="left:224px;width:42px;color:#eeeeec;"> 19</i><i style="left:280px;width:42px;color:#bb271a;"> -1</i><i style="left:350px;width:56px;color:#48a0a3;">320M</i><i style="left:434px;width:56px;color:#48a0a3;">136M</i><i style="left:518px;width:56px;color:#48a0a3;">124M</i><i class="b" style="left:588px;width:14px;color:#eeeeec;">S</i><i class="b" style="left:616px;width:56px;color:#eeeeec;"> 0.0</i><i class="b" style="left:686px;width:56px;color:#eeeeec;"> 3.6</i><i class="b" style="left:756px;width:112px;color:#eeeeec;"> 5:08.51</i><i class="b" style="left:882px;width:406px;color:#eeeeec;">/lib/systemd/systemd-journald</i></div><div class="r" style="top:720px"><i class="b" style="left:0px;width:70px;color:#eeeeec;">  485</i><i class="b" style="left:84px;width:56px;color:#eeeeec;">root</i><i class="b" style="left:224px;width:42px;color:#eeeeec;"> 20</i><i class="b" style="left:280px;width:42px;color:#eeeeec;">  0</i><i style="left:336px;width:28px;color:#48a0a3;">98</i><i class="b" style="left:364px;width:42px;color:#eeeeec;">776</i><i class="b" style="left:448px;width:42px;color:#eeeeec;">992</i><i class="b" style="left:532px;width:42px;color:#eeeeec;">804</i><i class="b" style="left:588px;width:14px;color:#eeeeec;">S</i><i class="b" style="left:616px;width:56px;color:#eeeeec;"> 0.0</i><i class="b" style="left:686px;width:56px;color:#eeeeec;"> 0.0</i><i class="b" style="left:756px;width:112px;color:#eeeeec;"> 0:00.00</i><i class="b" style="left:882px;width:224px;color:#eeeeec;">/sbin/lvmetad -f</i></div><div class="r" style="top:750px"><i class="b" style="left:0px;width:70px;color:#eeeeec;">  500</i><i class="b" style="left:84px;width:56px;color:#eeeeec;">root</i><i class="b" style="left:224px;width:42px;color:#eeeeec;"> 20</i><i class="b" style="left:280px;width:42px;color:#eeeeec;">  0</i><i style="left:336px;width:28px;color:#48a0a3;">44</i><i class="b" style="left:364px;width:42px;color:#eeeeec;">936</i><i style="left:434px;width:14px;color:#48a0a3;">4</i><i class="b" style="left:448px;width:42px;color:#eeeeec;">720</i><i style="left:518px;width:14px;color:#48a0a3;">2</i><i class="b" style="left:532px;width:42px;color:#eeeeec;">952</i><i class="b" style="left:588px;width:14px;color:#eeeeec;">S</i><i class="b" style="left:616px;width:56px;color:#eeeeec;"> 0.0</i><i class="b" style="left:686px;width:56px;color:#eeeeec;"> 0.1</i><i class="b" style="left:756px;width:112px;color:#eeeeec;"> 0:17.98</i><i class="b" style="left:882px;width:364px;color:#eeeeec;">/lib/systemd/systemd-udevd</i></div><div class="r" style="top:780px"><i class="b" style="left:0px;width:70px;color:#eeeeec;">  855</i><i class="b" style="left:84px;width:56px;color:#eeeeec;">root</i><i class="b" style="left:224px;width:42px;color:#eeeeec;"> 20</i><i class="b" style="left:280px;width:42px;color:#eeeeec;">  0</i><i style="left:336px;width:28px;color:#48a0a3;">48</i><i class="b" style="left:364px;width:42px;color:#eeeeec;">664</i><i style="left:434px;width:14px;color:#48a0a3;">1</i><i class="b" style="left:448px;width:42px;color:#eeeeec;">032</i><i class="b" style="left:532px;width:42px;color:#eeeeec;">564</i><i class="b" style="left:588px;width:14px;color:#eeeeec;">S</i><i class="b" style="left:616px;width:56px;color:#eeeeec;"> 0.0</i><i class="b" style="left:686px;width:56px;color:#eeeeec;"> 0.0</i><i class="b" style="left:756px;width:112px;color:#eeeeec;"> 0:05.08</i><i class="b" style="left:882px;width:266px;color:#eeeeec;">/sbin/rpcbind -f -w</i></div><div class="r" style="top:810px"><i class="b" style="left:0px;width:70px;color:#eeeeec;">  983</i><i class="b" style="left:84px;width:140px;color:#555753;background:#2f3436;">systemd-n</i><i class="b" style="left:224px;width:42px;color:#eeeeec;"> 20</i><i class="b" style="left:280px;width:42px;color:#eeeeec;">  0</i><i style="left:336px;width:28px;color:#48a0a3;">81</i><i class="b" style="left:364px;width:42px;color:#eeeeec;">100</i><i style="left:434px;width:14px;color:#48a0a3;">2</i><i class="b" style="left:448px;width:42px;color:#eeeeec;">932</i><i style="left:518px;width:14px;color:#48a0a3;">2</i><i class="b" style="left:532px;width:42px;color:#eeeeec;">216</i><i class="b" style="left:588px;width:14px;color:#eeeeec;">S</i><i class="b" style="left:616px;width:56px;color:#eeeeec;"> 0.0</i><i class="b" style="left:686px;width:56px;color:#eeeeec;"> 0.1</i><i class="b" style="left:756px;width:112px;color:#eeeeec;"> 0:05.75</i><i class="b" style="left:882px;width:406px;color:#eeeeec;">/lib/systemd/systemd-networkd</i></div><div class="r" style="top:840px"><i class="b" style="left:0px;width:70px;color:#eeeeec;"> 1004</i><i class="b" style="left:84px;width:140px;color:#555753;background:#2f3436;">systemd-r</i><i class="b" style="left:224px;width:42px;color:#eeeeec;"> 20</i><i class="b" style="left:280px;width:42px;color:#eeeeec;">  0</i><i style="left:336px;width:28px;color:#48a0a3;">71</i><i class="b" style="left:364px;width:42px;color:#eeeeec;">664</i><i style="left:434px;width:14px;color:#48a0a3;">2</i><i class="b" style="left:448px;width:42px;color:#eeeeec;">592</i><i style="left:518px;width:14px;color:#48a0a3;">1</i><i class="b" style="left:532px;width:42px;color:#eeeeec;">900</i><i class="b" style="left:588px;width:14px;color:#eeeeec;">S</i><i class="b" style="left:616px;width:56px;color:#eeeeec;"> 0.0</i><i class="b" style="left:686px;width:56px;color:#eeeeec;"> 0.1</i><i class="b" style="left:756px;width:112px;color:#eeeeec;"> 2:36.10</i><i class="b" style="left:882px;width:406px;color:#eeeeec;">/lib/systemd/systemd-resolved</i></div><div class="r" style="top:870px"><i class="b" style="left:0px;width:70px;color:#eeeeec;"> 1126</i><i class="b" style="left:84px;width:56px;color:#eeeeec;">root</i><i class="b" style="left:224px;width:42px;color:#eeeeec;"> 20</i><i class="b" style="left:280px;width:42px;color:#eeeeec;">  0</i><i style="left:336px;width:28px;color:#48a0a3;">31</i><i class="b" style="left:364px;width:42px;color:#eeeeec;">716</i><i style="left:434px;width:14px;color:#48a0a3;">2</i><i class="b" style="left:448px;width:42px;color:#eeeeec;">716</i><i style="left:518px;width:14px;color:#48a0a3;">2</i><i class="b" style="left:532px;width:42px;color:#eeeeec;">424</i><i class="b" style="left:588px;width:14px;color:#eeeeec;">S</i><i class="b" style="left:616px;width:56px;color:#eeeeec;"> 0.0</i><i class="b" style="left:686px;width:56px;color:#eeeeec;"> 0.1</i><i class="b" style="left:756px;width:112px;color:#eeeeec;"> 0:42.63</i><i class="b" style="left:882px;width:238px;color:#eeeeec;">/usr/sbin/cron -f</i></div><div class="r" style="top:900px"><i class="b" style="left:0px;width:70px;color:#eeeeec;"> 1558</i><i class="b" style="left:84px;width:56px;color:#eeeeec;">root</i><i class="b" style="left:224px;width:42px;color:#eeeeec;"> 20</i><i class="b" style="left:280px;width:42px;color:#eeeeec;">  0</i><i style="left:350px;width:56px;color:#48a0a3;">166M</i><i style="left:420px;width:28px;color:#48a0a3;">10</i><i class="b" style="left:448px;width:42px;color:#eeeeec;">328</i><i style="left:518px;width:14px;color:#48a0a3;">2</i><i class="b" style="left:532px;width:42px;color:#eeeeec;">432</i><i class="b" style="left:588px;width:14px;color:#eeeeec;">S</i><i class="b" style="left:616px;width:56px;color:#eeeeec;"> 0.0</i><i class="b" style="left:686px;width:56px;color:#eeeeec;"> 0.3</i><i class="b" style="left:756px;width:112px;color:#eeeeec;"> 0:00.00</i><i style="left:882px;width:952px;color:#66a030;">/usr/bin/python3 /usr/bin/networkd-dispatcher --run-startup-triggers</i></div><div class="r" style="top:930px"><i class="b" style="left:0px;width:70px;color:#eeeeec;"> 1135</i><i class="b" style="left:84px;width:56px;color:#eeeeec;">root</i><i class="b" style="left:224px;width:42px;color:#eeeeec;"> 20</i><i class="b" style="left:280px;width:42px;color:#eeeeec;">  0</i><i style="left:350px;width:56px;color:#48a0a3;">166M</i><i style="left:420px;width:28px;color:#48a0a3;">10</i><i class="b" style="left:448px;width:42px;color:#eeeeec;">328</i><i style="left:518px;width:14px;color:#48a0a3;">2</i><i class="b" style="left:532px;width:42px;color:#eeeeec;">432</i><i class="b" style="left:588px;width:14px;color:#eeeeec;">S</i><i class="b" style="left:616px;width:56px;color:#eeeeec;"> 0.0</i><i class="b" style="left:686px;width:56px;color:#eeeeec;"> 0.3</i><i class="b" style="left:756px;width:112px;color:#eeeeec;"> 0:00.46</i><i class="b" style="left:882px;width:952px;color:#eeeeec;">/usr/bin/python3 /usr/bin/networkd-dispatcher --run-startup-triggers</i></div><div class="r" style="top:960px"><i class="b" style="left:0px;width:70px;color:#eeeeec;"> 1142</i><i class="b" style="left:84px;width:140px;color:#555753;background:#2f3436;">daemon</i><i class="b" style="left:224px;width:42px;color:#eeeeec;"> 20</i><i class="b" style="left:280px;width:42px;color:#eeeeec;">  0</i><i style="left:336px;width:28px;color:#48a0a3;">29</i><i class="b" style="left:364px;width:42px;color:#eeeeec;">384</i><i style="left:434px;width:14px;color:#48a0a3;">1</i><i class="b" style="left:448px;width:42px;color:#eeeeec;">944</i><i style="left:518px;width:14px;color:#48a0a3;">1</i><i class="b" style="left:532px;width:42px;color:#eeeeec;">728</i><i class="b" style="left:588px;width:14px;color:#eeeeec;">S</i><i class="b" style="left:616px;width:56px;color:#eeeeec;"> 0.0</i><i class="b" style="left:686px;width:56px;color:#eeeeec;"> 0.1</i><i class="b" style="left:756px;width:112px;color:#eeeeec;"> 0:00.04</i><i class="b" style="left:882px;width:224px;color:#eeeeec;">/usr/sbin/atd -f</i></div><div class="r" style="top:990px"><i class="b" style="left:0px;width:70px;color:#eeeeec;"> 1145</i><i class="b" style="left:84px;width:56px;color:#eeeeec;">root</i><i class="b" style="left:224px;width:42px;color:#eeeeec;"> 20</i><i class="b" style="left:280px;width:42px;color:#eeeeec;">  0</i><i style="left:336px;width:28px;color:#48a0a3;">72</i><i class="b" style="left:364px;width:42px;color:#eeeeec;">736</i><i style="left:434px;width:14px;color:#48a0a3;">5</i><i class="b" style="left:448px;width:42px;color:#eeeeec;">528</i><i style="left:518px;width:14px;color:#48a0a3;">3</i><i class="b" style="left:532px;width:42px;color:#eeeeec;">712</i><i class="b" style="left:588px;width:14px;color:#eeeeec;">S</i><i class="b" style="left:616px;width:56px;color:#eeeeec;"> 0.0</i><i class="b" style="left:686px;width:56px;color:#eeeeec;"> 0.1</i><i class="b" style="left:756px;width:112px;color:#eeeeec;"> 0:17.69</i><i class="b" style="left:882px;width:378px;color:#eeeeec;">/lib/systemd/systemd-logind</i></div><div class="r" style="top:1020px"><i class="b" style="left:0px;width:70px;color:#eeeeec;"> 1179</i><i class="b" style="left:84px;width:140px;color:#555753;background:#2f3436;">syslog</i><i class="b" style="left:224px;width:42px;color:#eeeeec;"> 20</i><i class="b" style="left:280px;width:42px;color:#eeeeec;">  0</i><i style="left:350px;width:56px;color:#48a0a3;">257M</i><i style="left:434px;width:14px;color:#48a0a3;">1</i><i class="b" style="left:448px;width:42px;color:#eeeeec;">724</i><i class="b" style="left:560px;width:14px;color:#eeeeec;">0</i><i class="b" style="left:588px;width:14px;color:#eeeeec;">S</i><i class="b" style="left:616px;width:56px;color:#eeeeec;"> 0.0</i><i class="b" style="left:686px;width:56px;color:#eeeeec;"> 0.0</i><i class="b" style="left:756px;width:112px;color:#eeeeec;"> 0:46.49</i><i style="left:882px;width:294px;color:#66a030;">/usr/sbin/rsyslogd -n</i></div><div class="r" style="top:1050px"><i class="b" style="left:0px;width:70px;color:#eeeeec;"> 1180</i><i class="b" style="left:84px;width:140px;color:#555753;background:#2f3436;">syslog</i><i class="b" style="left:224px;width:42px;color:#eeeeec;"> 20</i><i class="b" style="left:280px;width:42px;color:#eeeeec;">  0</i><i style="left:350px;width:56px;color:#48a0a3;">257M</i><i style="left:434px;width:14px;color:#48a0a3;">1</i><i class="b" style="left:448px;width:42px;color:#eeeeec;">724</i><i class="b" style="left:560px;width:14px;color:#eeeeec;">0</i><i class="b" style="left:588px;width:14px;color:#eeeeec;">S</i><i class="b" style="left:616px;width:56px;color:#eeeeec;"> 0.0</i><i class="b" style="left:686px;width:56px;color:#eeeeec;"> 0.0</i><i class="b" style="left:756px;width:112px;color:#eeeeec;"> 0:00.14</i><i style="left:882px;width:294px;color:#66a030;">/usr/sbin/rsyslogd -n</i></div><div class="r" style="top:1080px"><i class="b" style="left:0px;width:70px;color:#eeeeec;"> 1181</i><i class="b" style="left:84px;width:140px;color:#555753;background:#2f3436;">syslog</i><i class="b" style="left:224px;width:42px;color:#eeeeec;"> 20</i><i class="b" style="left:280px;width:42px;color:#eeeeec;">  0</i><i style="left:350px;width:56px;color:#48a0a3;">257M</i><i style="left:434px;width:14px;color:#48a0a3;">1</i><i class="b" style="left:448px;width:42px;color:#eeeeec;">724</i><i class="b" style="left:560px;width:14px;color:#eeeeec;">0</i><i class="b" style="left:588px;width:14px;color:#eeeeec;">S</i><i class="b" style="left:616px;width:56px;color:#eeeeec;"> 0.0</i><i class="b" style="left:686px;width:56px;color:#eeeeec;"> 0.0</i><i class="b" style="left:756px;width:112px;color:#eeeeec;"> 0:42.35</i><i style="left:882px;width:294px;color:#66a030;">/usr/sbin/rsyslogd -n</i></div><div class="r" style="top:1110px"><i class="b" style="left:0px;width:70px;color:#eeeeec;"> 1146</i><i class="b" style="left:84px;width:140px;color:#555753;background:#2f3436;">syslog</i><i class="b" style="left:224px;width:42px;color:#eeeeec;"> 20</i><i class="b" style="left:280px;width:42px;color:#eeeeec;">  0</i><i style="left:350px;width:56px;color:#48a0a3;">257M</i><i style="left:434px;width:14px;color:#48a0a3;">1</i><i class="b" style="left:448px;width:42px;color:#eeeeec;">724</i><i class="b" style="left:560px;width:14px;color:#eeeeec;">0</i><i class="b" style="left:588px;width:14px;color:#eeeeec;">S</i><i class="b" style="left:616px;width:56px;color:#eeeeec;"> 0.0</i><i class="b" style="left:686px;width:56px;color:#eeeeec;"> 0.0</i><i class="b" style="left:756px;width:112px;color:#eeeeec;"> 1:29.33</i><i class="b" style="left:882px;width:294px;color:#eeeeec;">/usr/sbin/rsyslogd -n</i></div><div class="r" style="top:1140px"><i class="b" style="left:0px;width:70px;color:#eeeeec;"> 1185</i><i class="b" style="left:84px;width:56px;color:#eeeeec;">root</i><i class="b" style="left:224px;width:42px;color:#eeeeec;"> 20</i><i class="b" style="left:280px;width:42px;color:#eeeeec;">  0</i><i style="left:350px;width:56px;color:#48a0a3;">303M</i><i style="left:434px;width:14px;color:#48a0a3;">3</i><i class="b" style="left:448px;width:42px;color:#eeeeec;">316</i><i style="left:518px;width:14px;color:#48a0a3;">1</i><i class="b" style="left:532px;width:42px;color:#eeeeec;">608</i><i class="b" style="left:588px;width:14px;color:#eeeeec;">S</i><i class="b" style="left:616px;width:56px;color:#eeeeec;"> 0.0</i><i class="b" style="left:686px;width:56px;color:#eeeeec;"> 0.1</i><i class="b" style="left:756px;width:112px;color:#eeeeec;"> 0:08.46</i><i style="left:882px;width:420px;color:#66a030;">/usr/bin/lxcfs /var/lib/lxcfs/</i></div><div class="r" style="top:1170px"><i class="b" style="left:0px;width:28px;color:#eeeeec;">F1</i><i style="left:28px;width:84px;color:#2f3436;background:#449699;">Help  </i><i class="b" style="left:112px;width:28px;color:#eeeeec;">F2</i><i style="left:140px;width:84px;color:#2f3436;background:#449699;">Setup </i><i class="b" style="left:224px;width:28px;color:#eeeeec;">F3</i><i style="left:252px;width:84px;color:#2f3436;background:#449699;">Search</i><i class="b" style="left:336px;width:28px;color:#eeeeec;">F4</i><i style="left:364px;width:84px;color:#2f3436;background:#449699;">Filter</i><i class="b" style="left:448px;width:28px;color:#eeeeec;">F5</i><i style="left:476px;width:84px;color:#2f3436;background:#449699;">Tree  </i><i class="b" style="left:560px;width:28px;color:#eeeeec;">F6</i><i style="left:588px;width:84px;color:#2f3436;background:#449699;">SortBy</i><i class="b" style="left:672px;width:28px;color:#eeeeec;">F7</i><i style="left:700px;width:84px;color:#2f3436;background:#449699;">Nice -</i><i class="b" style="left:784px;width:28px;color:#eeeeec;">F8</i><i style="left:812px;width:84px;color:#2f3436;background:#449699;">Nice +</i><i class="b" style="left:896px;width:28px;color:#eeeeec;">F9</i><i style="left:924px;width:84px;color:#2f3436;background:#449699;">Kill  </i><i class="b" style="left:1008px;width:42px;color:#eeeeec;">F10</i><i style="left:1050px;width:1050px;color:#2f3436;background:#449699;">Quit</i></div></div><div class="abs" style="left:8px;top:1138px;width:1784px;height:30px;background:#fafafa"><div class="abs" style="left:6px;top:8px;width:1612px;height:16px;border-radius:8px;background:#c1c1c1"></div></div></div>
<div class="abs" style="left:24px;top:1288px;width:1799px;height:56px;border:2px solid #dcdfe6;border-radius:8px;background:#fff"><svg class="abs" style="left:22px;top:14px;width:24px;height:24px;fill:none;stroke:#c0c4cc;stroke-width:1.700;stroke-linecap:round;stroke-linejoin:round" viewBox="0 0 24 24"><path d="M8.500 4.500l7.500 7.500-7.500 7.500"/></svg><div class="abs" style="left:61px;top:6px;font-size:24px;line-height:40px;color:#c0c4cc;white-space:nowrap">此处可输入命令，按回车键执行</div></div>
</div>
<div class="card" style="left:1152px;top:1759px;width:1848px;height:188px"><div class="ct">命令历史</div><div class="tag" style="left:24px;width:116px">python</div><div class="tag" style="left:160px;width:84px">java</div></div>
</div></div>
</body></html>
